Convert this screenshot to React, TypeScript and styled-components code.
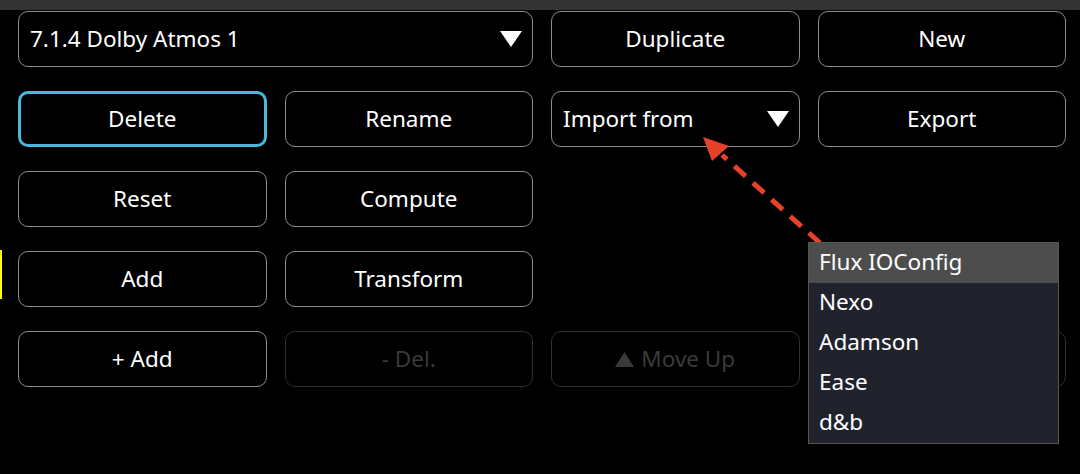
import React from "react";
import styled, { createGlobalStyle, css } from "styled-components";

const Global = createGlobalStyle`
  html, body { margin: 0; padding: 0; background: #000; }
  body { font-family: "Noto Sans", "Open Sans", sans-serif; }
  * { box-sizing: border-box; }
`;

const FONT = `"Noto Sans", "Open Sans", sans-serif`;
const SIZE = "22.5px";

const Page = styled.div`
  position: relative;
  width: 1080px;
  height: 474px;
  background: #000;
  overflow: hidden;
`;

const TopBar = styled.div`
  height: 10px;
  background: #333333;
`;

const Grid = styled.div`
  display: grid;
  grid-template-columns: repeat(4, 248.5px);
  grid-auto-rows: 56px;
  column-gap: 18px;
  row-gap: 24px;
  padding: 1px 0 0 18px;
`;

const Button = styled.button<{ $focused?: boolean; $disabled?: boolean }>`
  display: flex;
  align-items: center;
  justify-content: center;
  gap: 7px;
  background: #000;
  color: #fff;
  font-family: ${FONT};
  font-size: ${SIZE};
  font-weight: 400;
  border: 1px solid #8c8c8c;
  border-radius: 10px;
  padding: 0 0 2px 0;
  ${(p) =>
    p.$focused &&
    css`
      border: 3px solid #4bb6da;
    `}
  ${(p) =>
    p.$disabled &&
    css`
      border-color: #2f2f2f;
      color: #3a3a3a;
    `}
`;

const Select = styled.div<{ $span?: number }>`
  grid-column: span ${(p) => p.$span ?? 1};
  display: flex;
  align-items: center;
  justify-content: space-between;
  border: 1px solid #8c8c8c;
  border-radius: 10px;
  padding: 0 10px 2px 11px;
  color: #fff;
  font-family: ${FONT};
  font-size: ${SIZE};
`;

const Caret = styled.svg`
  width: 22px;
  height: 16px;
  margin-top: 2px;
`;

const MoveIcon = styled.svg`
  width: 19px;
  height: 15px;
  margin-top: 3px;
`;

const Empty = styled.div``;

const YellowMark = styled.div`
  position: absolute;
  left: 0;
  top: 250px;
  width: 2px;
  height: 49px;
  background: #ffff00;
`;

const Menu = styled.div`
  position: absolute;
  left: 808px;
  top: 242px;
  width: 251px;
  background: #20232c;
  border: 1px solid #565656;
  display: flex;
  flex-direction: column;
`;

const MenuItem = styled.div<{ $active?: boolean }>`
  height: 40px;
  display: flex;
  align-items: center;
  padding: 0 0 3px 10px;
  color: #fff;
  font-family: ${FONT};
  font-size: ${SIZE};
  background: ${(p) => (p.$active ? "#4d4d4d" : "transparent")};
`;

const ArrowSvg = styled.svg`
  position: absolute;
  left: 0;
  top: 0;
  pointer-events: none;
`;

const CaretIcon = () => (
  <Caret viewBox="0 0 22 16">
    <polygon points="0,0 22,0 11,16" fill="#fff" />
  </Caret>
);

const UpIcon = () => (
  <MoveIcon viewBox="0 0 19 15">
    <polygon points="9.5,0 19,15 0,15" fill="#3a3a3a" />
  </MoveIcon>
);

const DownIcon = () => (
  <MoveIcon viewBox="0 0 19 15">
    <polygon points="0,0 19,0 9.5,15" fill="#3a3a3a" />
  </MoveIcon>
);

export default function App() {
  return (
    <Page>
      <Global />
      <TopBar />
      <Grid>
        <Select $span={2}>
          <span>7.1.4 Dolby Atmos 1</span>
          <CaretIcon />
        </Select>
        <Button>Duplicate</Button>
        <Button>New</Button>

        <Button $focused>Delete</Button>
        <Button>Rename</Button>
        <Select>
          <span>Import from</span>
          <CaretIcon />
        </Select>
        <Button>Export</Button>

        <Button>Reset</Button>
        <Button>Compute</Button>
        <Empty />
        <Empty />

        <Button>Add</Button>
        <Button>Transform</Button>
        <Empty />
        <Empty />

        <Button>+ Add</Button>
        <Button $disabled>- Del.</Button>
        <Button $disabled>
          <UpIcon />
          <span>Move Up</span>
        </Button>
        <Button $disabled>
          <DownIcon />
          <span>Move Down</span>
        </Button>
      </Grid>

      <YellowMark />

      <ArrowSvg width="1080" height="474" viewBox="0 0 1080 474">
        <line
          x1="820"
          y1="243"
          x2="722"
          y2="155"
          stroke="#e8412a"
          strokeWidth="5"
          strokeDasharray="15 10"
        />
        <polygon points="703,137 729,146 712,161" fill="#e8412a" />
      </ArrowSvg>

      <Menu>
        <MenuItem $active>Flux IOConfig</MenuItem>
        <MenuItem>Nexo</MenuItem>
        <MenuItem>Adamson</MenuItem>
        <MenuItem>Ease</MenuItem>
        <MenuItem>d&amp;b</MenuItem>
      </Menu>
    </Page>
  );
}
